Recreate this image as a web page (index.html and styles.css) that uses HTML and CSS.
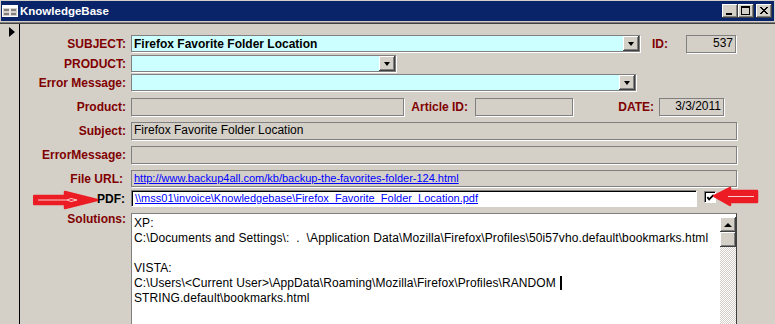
FILE: index.html
```html
<!DOCTYPE html>
<html lang="en">
<head>
  <meta charset="UTF-8" />
  <title>KnowledgeBase</title>
  <link rel="stylesheet" href="styles.css">
</head>
<body>
  <div class="window">
    <div class="titlebar">
      <svg class="app-icon" width="16" height="14" viewBox="0 0 16 14">
        <rect x="0.5" y="1.5" width="15" height="11" fill="#d4d0c8" stroke="#fff"/>
        <rect x="1" y="2" width="14" height="2" fill="#fff"/>
        <rect x="2" y="5" width="5" height="2" fill="#808080"/>
        <rect x="9" y="5" width="5" height="2" fill="#808080"/>
        <rect x="2" y="9" width="5" height="2" fill="#808080"/>
        <rect x="9" y="9" width="5" height="2" fill="#808080"/>
        <rect x="7.5" y="4" width="1" height="8" fill="#fff"/>
      </svg>
      <span class="title">KnowledgeBase</span>
      <div class="caption-btns">
        <span class="cap-btn">
          <svg width="16" height="14" viewBox="0 0 16 14"><rect x="4" y="9" width="6" height="2" fill="#000"/></svg>
        </span>
        <span class="cap-btn">
          <svg width="16" height="14" viewBox="0 0 16 14"><rect x="3.5" y="2.5" width="8" height="8" fill="none" stroke="#000"/><rect x="3" y="2" width="9" height="2" fill="#000"/></svg>
        </span>
        <span class="cap-btn close">
          <svg width="16" height="14" viewBox="0 0 16 14"><path d="M4 3 L11 10 M5 3 L12 10 M11 3 L4 10 M12 3 L5 10" stroke="#000" stroke-width="1"/></svg>
        </span>
      </div>
    </div>

    <div class="client">
      <div class="selector"><span class="pointer"></span></div>

      <div class="form">
        <div class="row r1">
          <span class="label">SUBJECT:</span>
          <div class="combo w-subject">
            <span class="combo-text bold">Firefox Favorite Folder Location</span>
            <span class="drop-btn"></span>
          </div>
          <span class="label side id-label">ID:</span>
          <div class="field num w-id">537</div>
        </div>

        <div class="row r2">
          <span class="label">PRODUCT:</span>
          <div class="combo w-product">
            <span class="combo-text"></span>
            <span class="drop-btn"></span>
          </div>
        </div>

        <div class="row r3">
          <span class="label">Error Message:</span>
          <div class="combo w-error">
            <span class="combo-text"></span>
            <span class="drop-btn"></span>
          </div>
        </div>

        <div class="row r4 tall">
          <span class="label">Product:</span>
          <div class="field w-prod"></div>
          <span class="label side article-label">Article ID:</span>
          <div class="field w-article"></div>
          <span class="label side date-label">DATE:</span>
          <div class="field num w-date">3/3/2011</div>
        </div>

        <div class="row r5 tall">
          <span class="label">Subject:</span>
          <div class="field w-full">Firefox Favorite Folder Location</div>
        </div>

        <div class="row r6 tall">
          <span class="label">ErrorMessage:</span>
          <div class="field w-full"></div>
        </div>

        <div class="row r7">
          <span class="label url-label">File URL:</span>
          <div class="field w-full"><a href="#">http://www.backup4all.com/kb/backup-the-favorites-folder-124.html</a></div>
        </div>

        <div class="row r8">
          <svg class="arrow arrow-right" width="66" height="20" viewBox="0 0 66 20">
            <polygon points="1,6 32,6 32,2 64,10 32,18 32,14 1,14" fill="#ec1c24" stroke="#ec1c24" stroke-width="2.5" stroke-linejoin="round"/>
            <polyline points="5,10 34,10 38,8.5 44,10 38,11.5 34,10" fill="none" stroke="#f7d0d0" stroke-width="1"/>
          </svg>
          <span class="label pdf-label">PDF:</span>
          <div class="field pdf w-pdf"><a href="#">\\mss01\invoice\Knowledgebase\Firefox_Favorite_Folder_Location.pdf</a></div>
          <span class="checkbox">
            <svg width="10" height="10" viewBox="0 0 10 10"><polyline points="1.5,4 3.5,6.5 8.5,1.5" fill="none" stroke="#000" stroke-width="2"/></svg>
          </span>
          <svg class="arrow arrow-left" width="48" height="22" viewBox="0 0 48 22">
            <polygon points="2,10 18,2 18,5 45,5 45,16 18,16 18,19" fill="#ec1c24" stroke="#ec1c24" stroke-width="2.5" stroke-linejoin="round"/>
            <polyline points="16,10.5 42,10.5" fill="none" stroke="#f7d0d0" stroke-width="1"/>
          </svg>
        </div>

        <div class="row r9">
          <span class="label">Solutions:</span>
          <div class="memo w-full">
            <div class="memo-text">
              XP:<br>
              C:\Documents and Settings\:&nbsp;&nbsp;.&nbsp;&nbsp;\Application Data\Mozilla\Firefox\Profiles\50i57vho.default\bookmarks.html<br>
              <br>
              VISTA:<br>
              C:\Users\&lt;Current User&gt;\AppData\Roaming\Mozilla\Firefox\Profiles\RANDOM<span class="caret"></span><br>
              STRING.default\bookmarks.html
            </div>
            <div class="scrollbar">
              <span class="scroll-btn"><span class="up"></span></span>
              <span class="scroll-btn"></span>
              <span class="track"></span>
            </div>
          </div>
        </div>
      </div>
    </div>
  </div>
</body>
</html>
```

FILE: styles.css
```css
* {
  margin: 0;
  padding: 0;
  box-sizing: border-box;
}

body {
  background: #d4d0c8;
  font-family: "Liberation Sans", Arial, sans-serif;
  font-size: 12px;
  color: #000;
  width: 775px;
  height: 324px;
  overflow: hidden;
}

.window {
  height: 324px;
  display: flex;
  flex-direction: column;
}

/* Title bar */
.titlebar {
  height: 20px;
  margin: 1px 1px 0;
  background: #0a246a;
  color: #fff;
  display: flex;
  align-items: center;
}

.app-icon {
  margin-left: 1px;
  flex-shrink: 0;
}

.title {
  margin-left: 2px;
  font-weight: bold;
  font-size: 11.5px;
}

.caption-btns {
  margin-left: auto;
  margin-right: 2px;
  display: flex;
}

.cap-btn {
  width: 16px;
  height: 14px;
  background: #d4d0c8;
  box-shadow: inset -1px -1px #404040, inset 1px 1px #fff, inset -2px -2px #808080;
  display: block;
}

.cap-btn svg {
  display: block;
}

.cap-btn.close {
  margin-left: 2px;
}

/* Form window body */
.client {
  flex: 1;
  display: flex;
  margin-top: 1px;
  border-top: 1px solid #808080;
  box-shadow: inset 0 1px 0 #404040;
  padding-top: 1px;
  min-height: 0;
}

.selector {
  width: 20px;
  border-right: 1px solid #000;
  flex-shrink: 0;
}

.pointer {
  display: block;
  width: 0;
  height: 0;
  margin: 3px 0 0 9px;
  border-left: 6px solid #000;
  border-top: 5px solid transparent;
  border-bottom: 5px solid transparent;
}

.form {
  flex: 1;
}

.row {
  display: flex;
  align-items: center;
  height: 17px;
  position: relative;
}

.row.tall {
  height: 18px;
}

.r1 { margin-top: 11px; }
.r2 { margin-top: 3px; }
.r3 { margin-top: 2px; }
.r4 { margin-top: 7px; }
.r5 { margin-top: 6px; }
.r6 { margin-top: 6px; }
.r7 { margin-top: 6px; }
.r8 { margin-top: 3px; }
.r9 {
  margin-top: 6px;
  height: auto;
  align-items: flex-start;
}

.label {
  width: 106px;
  margin-right: 5px;
  text-align: right;
  color: #800000;
  font-weight: bold;
  white-space: nowrap;
  flex-shrink: 0;
}

.r9 .label {
  margin-top: -1px;
}

.url-label {
  padding-right: 3px;
}

.pdf-label {
  color: #000;
  padding-right: 1px;
}

.label.side {
  margin-right: 0;
}

.id-label {
  width: 46px;
  padding-right: 18px;
}

.article-label {
  width: 71px;
  padding-right: 7px;
}

.date-label {
  width: 86px;
  padding-right: 5px;
}

/* Combo boxes */
.combo {
  height: 17px;
  background: #ccffff;
  border: 1px solid #808080;
  box-shadow: 1px 1px 0 #fff;
  display: flex;
  align-items: center;
  flex-shrink: 0;
}

.combo-text {
  flex: 1;
  padding-left: 2px;
  white-space: nowrap;
}

.bold {
  font-weight: bold;
}

.drop-btn {
  width: 16px;
  height: 15px;
  background: #d4d0c8;
  box-shadow: inset -1px -1px #404040, inset 1px 1px #fff, inset -2px -2px #808080;
  display: flex;
  align-items: center;
  justify-content: center;
}

.drop-btn::after {
  content: "";
  border-top: 4px solid #000;
  border-left: 3.5px solid transparent;
  border-right: 3.5px solid transparent;
  margin-top: 1px;
}

/* Text boxes */
.field {
  height: 100%;
  border: 1px solid #808080;
  box-shadow: 1px 1px 0 #fff;
  padding-left: 2px;
  line-height: 15px;
  white-space: nowrap;
  overflow: hidden;
  flex-shrink: 0;
}

.field.num {
  text-align: right;
  padding-right: 2px;
}

.field a {
  color: #0000ff;
  font-size: 11px;
}

.field.pdf {
  background: #fff;
  border-color: #808080 #fff #fff #808080;
  box-shadow: inset 1px 1px 0 #000;
  padding-left: 3px;
}

.w-subject { width: 509px; }
.w-product { width: 265px; }
.w-error { width: 505px; }
.w-id { width: 50px; height: 18px; }
.w-prod { width: 273px; }
.w-article { width: 98px; }
.w-date { width: 65px; }
.w-full { width: 606px; }
.w-pdf { width: 566px; }

.checkbox {
  width: 12px;
  height: 12px;
  margin-left: 7px;
  background: #fff;
  border: 1px solid;
  border-color: #808080 #fff #fff #808080;
  box-shadow: inset 1px 1px 0 #000;
  display: flex;
  align-items: center;
  justify-content: center;
  align-self: flex-start;
  margin-top: 1px;
}

.checkbox svg {
  display: block;
  margin: 1px 0 0 1px;
}

/* Red annotation arrows */
.arrow {
  position: absolute;
  display: block;
}

.arrow-right {
  left: 13px;
  top: 0;
}

.arrow-left {
  left: 692px;
  top: -4px;
}

/* Memo field */
.memo {
  height: 111px;
  background: #fff;
  border: 1px solid #808080;
  border-bottom: none;
  border-right-color: #404040;
  display: flex;
  flex-shrink: 0;
}

.memo-text {
  flex: 1;
  padding: 2px 0 0 2px;
  line-height: 15px;
  letter-spacing: 0.1px;
  white-space: nowrap;
  overflow: hidden;
}

.caret {
  display: inline-block;
  width: 2px;
  height: 14px;
  background: #000;
  margin-left: 4px;
  vertical-align: -3px;
}

.scrollbar {
  width: 16px;
  margin-top: 3px;
  display: flex;
  flex-direction: column;
}

.scroll-btn {
  height: 15px;
  background: #d4d0c8;
  box-shadow: inset -1px -1px #404040, inset 1px 1px #fff, inset -2px -2px #808080;
  display: flex;
  align-items: center;
  justify-content: center;
}

.up {
  border-bottom: 4px solid #000;
  border-left: 4px solid transparent;
  border-right: 4px solid transparent;
}

.track {
  flex: 1;
  background: repeating-conic-gradient(#fff 0 25%, #d4d0c8 0 50%) 0 0 / 2px 2px;
}
```
